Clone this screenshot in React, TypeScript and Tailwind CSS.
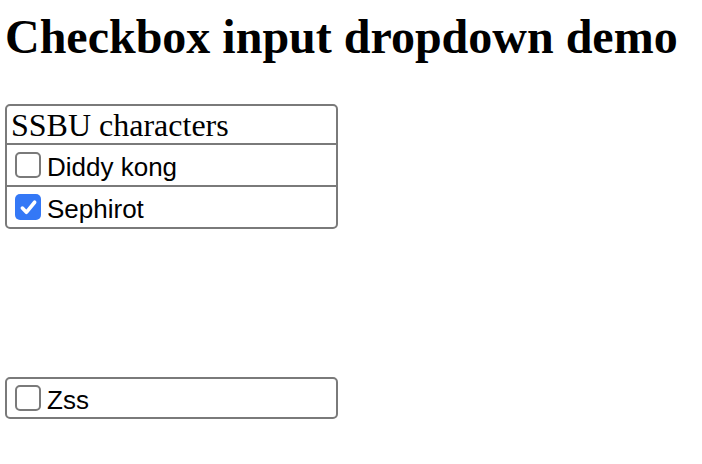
import React, { useState } from "react";

const serif = { fontFamily: '"Liberation Serif", "Times New Roman", serif' };
const sans = { fontFamily: '"Liberation Sans", Arial, sans-serif' };

const Box: React.FC<{ checked: boolean; onClick: () => void }> = ({ checked, onClick }) => (
  <span
    onClick={onClick}
    className={`ml-[8px] mr-[6px] flex h-[26px] w-[26px] shrink-0 items-center justify-center rounded-[5px] ${
      checked ? "bg-[#3478f6]" : "border-2 border-[#7a7a7a] bg-white"
    }`}
  >
    {checked && (
      <svg width="19" height="19" viewBox="0 0 17 17" fill="none">
        <path d="M3 9l3.6 3.8L14 3.8" stroke="#fff" strokeWidth="3.2" strokeLinecap="round" strokeLinejoin="round" />
      </svg>
    )}
  </span>
);

const Row: React.FC<{ label: string; checked: boolean; onToggle: () => void; top?: boolean }> = ({
  label,
  checked,
  onToggle,
  top,
}) => (
  <div className={`flex items-center ${top ? "h-[42px] border-t-2 border-[#7a7a7a]" : "h-[38px]"}`}>
    <Box checked={checked} onClick={onToggle} />
    <span className="pt-[3px] text-[26px] leading-none text-black" style={sans}>
      {label}
    </span>
  </div>
);

const App: React.FC = () => {
  const [checked, setChecked] = useState<Record<string, boolean>>({
    "Diddy kong": false,
    Sephirot: true,
    Zss: false,
  });
  const toggle = (k: string) => setChecked((c) => ({ ...c, [k]: !c[k] }));

  return (
    <div className="min-h-[464px] bg-white px-[5px] pt-[9px]">
      <h1 className="text-[48px] font-bold leading-[55px] text-black" style={serif}>
        Checkbox input dropdown demo
      </h1>

      {/* dropdown, open */}
      <div className="mt-[40px] w-[333px] rounded-[5px] border-2 border-[#7a7a7a]">
        <div className="flex h-[37px] items-center pl-[4px] text-[32px] leading-none text-black" style={serif}>
          SSBU characters
        </div>
        <Row label="Diddy kong" checked={checked["Diddy kong"]} onToggle={() => toggle("Diddy kong")} top />
        <Row label="Sephirot" checked={checked["Sephirot"]} onToggle={() => toggle("Sephirot")} top />
      </div>

      {/* separate item */}
      <div className="mt-[148px] w-[333px] rounded-[5px] border-2 border-[#7a7a7a]">
        <Row label="Zss" checked={checked["Zss"]} onToggle={() => toggle("Zss")} />
      </div>
    </div>
  );
};

export default App;
